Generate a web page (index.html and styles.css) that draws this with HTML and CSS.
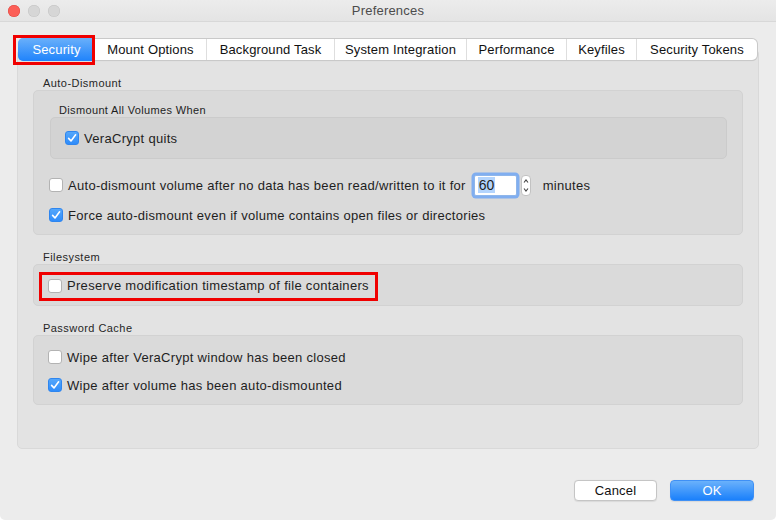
FILE: index.html
```html
<!DOCTYPE html>
<html lang="en">
<head>
  <meta charset="UTF-8" />
  <title>Preferences</title>
  <link rel="stylesheet" href="styles.css">
</head>
<body>

  <div class="window">
    <div class="titlebar">
      <div class="lights">
        <span class="light close"></span>
        <span class="light"></span>
        <span class="light"></span>
      </div>
      <div class="title">Preferences</div>
      <div></div>
    </div>

    <div class="tabs">
      <div class="tab-strip">
        <div class="tab tab-security selected marked-tab">Security</div>
        <div class="tab tab-mount">Mount Options</div>
        <div class="tab tab-background">Background Task</div>
        <div class="tab tab-system">System Integration</div>
        <div class="tab tab-performance">Performance</div>
        <div class="tab tab-keyfiles">Keyfiles</div>
        <div class="tab tab-tokens">Security Tokens</div>
      </div>
    </div>

    <div class="panel">
      <div class="group-label">Auto-Dismount</div>
      <div class="group group-dismount">
        <div class="sub-label">Dismount All Volumes When</div>
        <div class="subgroup">
          <div class="check">
            <span class="box checked">
              <svg width="10" height="10" viewBox="0 0 10 10"><path d="M1.6 5.4 L4 7.9 L8.6 1.8" fill="none" stroke="#fff" stroke-width="1.6" stroke-linecap="round" stroke-linejoin="round"/></svg>
            </span>
            VeraCrypt quits
          </div>
        </div>
        <div class="check timeout-row">
          <span class="box"></span>
          Auto-dismount volume after no data has been read/written to it for
          <span class="number-field"><span class="selected-text">60</span></span>
          <span class="stepper">
            <svg width="8" height="19" viewBox="0 0 8 19"><path d="M2 6.5 L4 4 L6 6.5" fill="none" stroke="#444" stroke-width="1.1"/><path d="M2 12.5 L4 15 L6 12.5" fill="none" stroke="#444" stroke-width="1.1"/></svg>
          </span>
          <span class="unit">minutes</span>
        </div>
        <div class="check force-row">
          <span class="box checked">
            <svg width="10" height="10" viewBox="0 0 10 10"><path d="M1.6 5.4 L4 7.9 L8.6 1.8" fill="none" stroke="#fff" stroke-width="1.6" stroke-linecap="round" stroke-linejoin="round"/></svg>
          </span>
          Force auto-dismount even if volume contains open files or directories
        </div>
      </div>

      <div class="group-label">Filesystem</div>
      <div class="group group-fs">
        <div class="check marked-row">
          <span class="box"></span>
          Preserve modification timestamp of file containers
        </div>
      </div>

      <div class="group-label">Password Cache</div>
      <div class="group group-cache">
        <div class="check">
          <span class="box"></span>
          Wipe after VeraCrypt window has been closed
        </div>
        <div class="check">
          <span class="box checked">
            <svg width="10" height="10" viewBox="0 0 10 10"><path d="M1.6 5.4 L4 7.9 L8.6 1.8" fill="none" stroke="#fff" stroke-width="1.6" stroke-linecap="round" stroke-linejoin="round"/></svg>
          </span>
          Wipe after volume has been auto-dismounted
        </div>
      </div>
    </div>

    <div class="buttons">
      <div class="btn">Cancel</div>
      <div class="btn btn-ok">OK</div>
    </div>
  </div>

</body>
</html>
```

FILE: styles.css
```css
body {
  margin: 0;
  background: #ffffff;
  font-family: "Liberation Sans", Arial, sans-serif;
  font-size: 13px;
  color: #1e1e1e;
}
.window {
  width: 776px;
  height: 520px;
  background: #ececec;
  border-radius: 0 0 5px 5px;
  overflow: hidden;
}
.titlebar {
  height: 22px;
  display: grid;
  grid-template-columns: 1fr auto 1fr;
  align-items: center;
  background: linear-gradient(#ececec, #e4e4e4);
  border-bottom: 1px solid #d8d8d8;
  box-sizing: border-box;
}
.lights {
  display: flex;
  gap: 8px;
  padding-left: 8px;
}
.light {
  width: 12px;
  height: 12px;
  border-radius: 50%;
  background: #d6d6d6;
  box-shadow: inset 0 0 0 0.5px #c4c4c4;
}
.light.close {
  background: #fc5f57;
  box-shadow: inset 0 0 0 0.5px #de4640;
}
.title {
  color: #4c4c4c;
  font-size: 13px;
  letter-spacing: 0.2px;
}

/* tabs */
.tabs {
  display: flex;
  justify-content: center;
  margin-top: 17px;
  position: relative;
  z-index: 1;
}
.tab-strip {
  display: flex;
  background: #fff;
  border-radius: 5px;
  box-shadow: 0 0 0 1px #c9c9c9, 0 1px 1px rgba(0,0,0,0.12);
  height: 21px;
}
.tab {
  box-sizing: border-box;
  text-align: center;
  line-height: 21px;
  border-left: 1px solid #dedede;
  color: #111;
  letter-spacing: 0.15px;
}
.tab-security { width: 76px; }
.tab-mount { width: 111px; }
.tab-background { width: 128px; }
.tab-system { width: 132px; }
.tab-performance { width: 100px; }
.tab-keyfiles { width: 70px; }
.tab-tokens { width: 121px; }
.tab:first-child {
  border-left: none;
}
.tab.selected {
  background: linear-gradient(#6ab0fa, #1f83fb);
  color: #fff;
  border-radius: 5px 0 0 5px;
  margin: -1px 0 -1px -1px;
  width: 77px;
  height: 23px;
  line-height: 23px;
}
.tab.selected + .tab {
  border-left: none;
}
.marked-tab {
  position: relative;
}
.marked-tab::after {
  content: "";
  position: absolute;
  left: -5px;
  right: 0;
  top: -3px;
  bottom: -4px;
  border: 3px solid #f00000;
}

/* panel */
.panel {
  margin: -11px 17px 0;
  height: 400px;
  box-sizing: border-box;
  background: #e3e3e3;
  border: 1px solid #d9d9d9;
  border-radius: 5px;
  padding: 26px 15px 0;
  letter-spacing: 0.3px;
}
.group-label {
  font-size: 11px;
  line-height: 14px;
  padding-left: 10px;
  color: #262626;
  letter-spacing: 0.45px;
}
.group {
  background: #dadada;
  border: 1px solid #d2d2d2;
  border-radius: 5px;
  margin-bottom: 15px;
}
.group-dismount {
  padding: 12px 15px 9px 15px;
  height: 145px;
  box-sizing: border-box;
}
.sub-label {
  font-size: 11px;
  line-height: 14px;
  padding-left: 10px;
  letter-spacing: 0.35px;
}
.subgroup {
  margin: 0 0 0 1px;
  background: #d3d3d3;
  border: 1px solid #cbcbcb;
  border-radius: 5px;
  height: 42px;
  box-sizing: border-box;
  padding: 0 14px;
  display: flex;
  align-items: center;
}
.check {
  display: flex;
  align-items: center;
  height: 20px;
  white-space: nowrap;
}
.box {
  width: 14px;
  height: 14px;
  box-sizing: border-box;
  background: #fff;
  border: 1px solid #b3b3b3;
  border-radius: 3px;
  margin-right: 5px;
  display: flex;
  align-items: center;
  justify-content: center;
  flex-shrink: 0;
}
.box.checked {
  background: linear-gradient(#55a7fb, #2f8cfa);
  border-color: #2f86ef;
}
.timeout-row {
  height: 24px;
  margin-top: 14px;
}
.force-row {
  margin-top: 8px;
}
.number-field {
  margin-left: 8px;
  width: 43px;
  height: 21px;
  box-sizing: border-box;
  background: #fff;
  border: 1px solid #8fb6ea;
  box-shadow: 0 0 0 2.5px #80aef0;
  border-radius: 2px;
  display: flex;
  align-items: center;
  padding-left: 3px;
  font-size: 14px;
  letter-spacing: 0;
}
.selected-text {
  background: #b3d4fd;
  line-height: 16px;
  padding: 0 1px;
}
.stepper {
  margin-left: 4px;
  width: 10px;
  height: 21px;
  box-sizing: border-box;
  background: #fff;
  border: 1px solid #c2c2c2;
  border-radius: 4px;
  display: flex;
  align-items: center;
  justify-content: center;
}
.unit {
  margin-left: 12px;
}
.group-fs {
  height: 42px;
  box-sizing: border-box;
  padding: 1px 14px 0;
  display: flex;
  align-items: center;
}
.marked-row {
  position: relative;
}
.marked-row::after {
  content: "";
  position: absolute;
  left: -9px;
  right: -9px;
  top: -4px;
  bottom: -5px;
  border: 3px solid #f00000;
}
.group-cache {
  height: 70px;
  box-sizing: border-box;
  padding: 11px 14px 0;
  display: flex;
  flex-direction: column;
  gap: 8px;
}

/* buttons */
.buttons {
  display: flex;
  justify-content: flex-end;
  gap: 13px;
  margin-top: 31px;
  padding-right: 22px;
}
.btn {
  width: 83px;
  height: 21px;
  box-sizing: border-box;
  background: #fff;
  border: 1px solid #c5c5c5;
  border-radius: 4px;
  box-shadow: 0 0.5px 1px rgba(0,0,0,0.08);
  text-align: center;
  line-height: 19px;
  color: #111;
  letter-spacing: 0.2px;
}
.btn-ok {
  width: 84px;
  background: linear-gradient(#6ab1fb, #1a80fb);
  border-color: #3f90f5;
  color: #fff;
}
```
